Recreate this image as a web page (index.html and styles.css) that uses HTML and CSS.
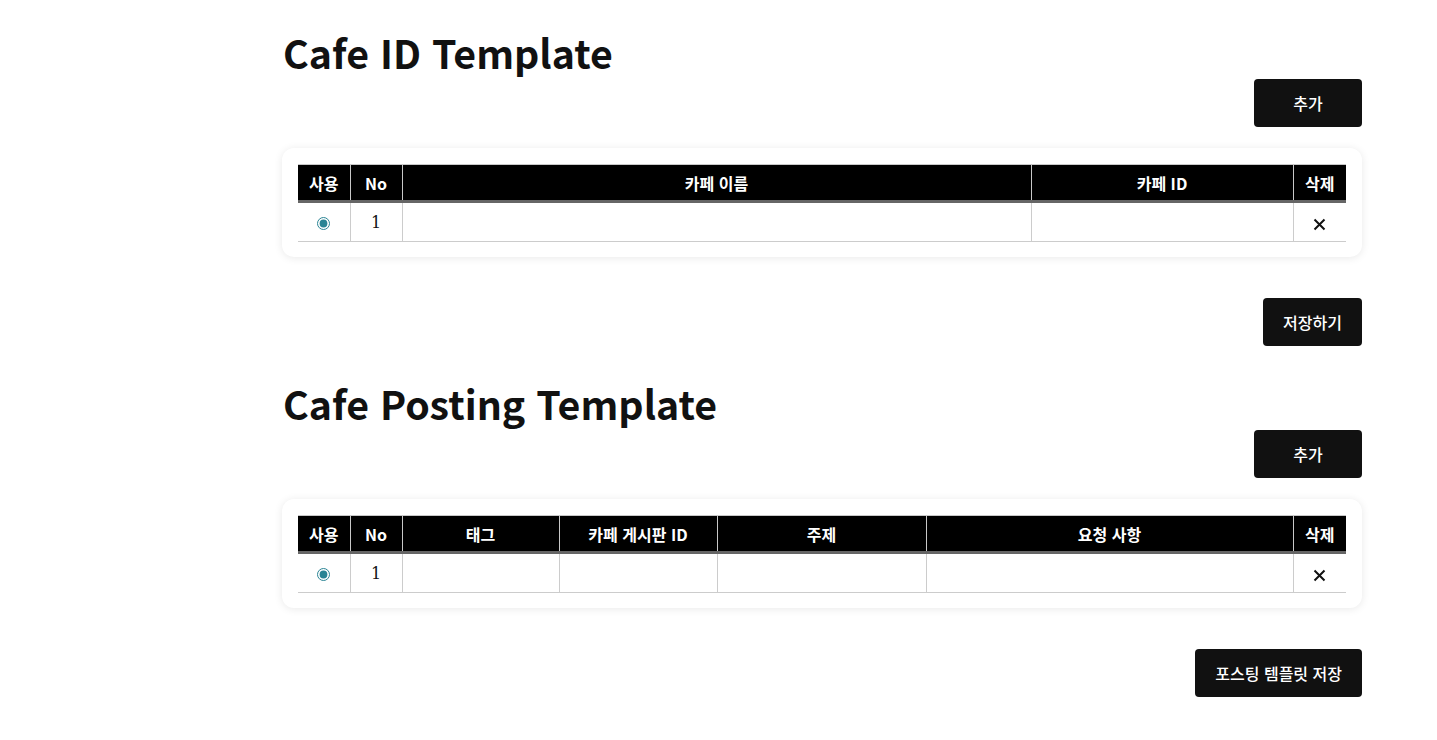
FILE: index.html
```html
<!DOCTYPE html>
<html lang="ko">
<head>
<meta charset="utf-8">
<title>Cafe Templates</title>
<link rel="stylesheet" href="styles.css">
</head>
<body>
<main class="page">
  <section class="section">
    <h1 class="title">Cafe ID Template</h1>
    <div class="actions actions-top"><button class="btn btn-add">추가</button></div>
    <div class="card">
      <table class="grid">
        <colgroup>
          <col class="c-use"><col class="c-no"><col class="c-name"><col class="c-id"><col class="c-del">
        </colgroup>
        <thead>
          <tr><th>사용</th><th>No</th><th>카페 이름</th><th>카페 ID</th><th>삭제</th></tr>
        </thead>
        <tbody>
          <tr>
            <td><input type="radio" name="cafe" checked></td>
            <td>1</td>
            <td></td>
            <td></td>
            <td><svg class="x" width="13" height="13" viewBox="0 0 13 13"><path d="M1.5 1.5L11.5 11.5M11.5 1.5L1.5 11.5"/></svg></td>
          </tr>
        </tbody>
      </table>
    </div>
    <div class="actions actions-save"><button class="btn">저장하기</button></div>
  </section>

  <section class="section">
    <h1 class="title">Cafe Posting Template</h1>
    <div class="actions actions-top"><button class="btn btn-add">추가</button></div>
    <div class="card">
      <table class="grid">
        <colgroup>
          <col class="c-use"><col class="c-no"><col class="c-tag"><col class="c-board"><col class="c-topic"><col class="c-req"><col class="c-del">
        </colgroup>
        <thead>
          <tr><th>사용</th><th>No</th><th>태그</th><th>카페 게시판 ID</th><th>주제</th><th>요청 사항</th><th>삭제</th></tr>
        </thead>
        <tbody>
          <tr>
            <td><input type="radio" name="post" checked></td>
            <td>1</td>
            <td></td>
            <td></td>
            <td></td>
            <td></td>
            <td><svg class="x" width="13" height="13" viewBox="0 0 13 13"><path d="M1.5 1.5L11.5 11.5M11.5 1.5L1.5 11.5"/></svg></td>
          </tr>
        </tbody>
      </table>
    </div>
    <div class="actions actions-save"><button class="btn">포스팅 템플릿 저장</button></div>
  </section>
</main>
</body>
</html>
```
FILE: styles.css
```css
html, body {
  margin: 0;
  padding: 0;
  background: #fff;
}
body {
  font-family: "Noto Sans CJK KR", "Noto Sans", sans-serif;
  color: #111;
}
.page {
  margin-left: 282px;
  width: 1080px;
}
.section {
  display: flex;
  flex-direction: column;
}
.title {
  margin: 28px 0 0 1px;
  font-size: 39.3px;
  line-height: 48px;
  font-weight: 700;
  color: #111;
}
.section + .section .title {
  margin-top: 33px;
}
.actions {
  display: flex;
  justify-content: flex-end;
}
.actions-top {
  margin-top: 3px;
}
.actions-save {
  margin-top: 41px;
}
.btn {
  height: 48px;
  padding: 0 20px;
  border: 0;
  border-radius: 4px;
  background: #111;
  color: #fff;
  font-family: "Noto Sans CJK KR", sans-serif;
  font-size: 16px;
  font-weight: 500;
  cursor: pointer;
}
.btn-add {
  min-width: 108px;
}
.card {
  margin-top: 21px;
  background: #fff;
  border-radius: 12px;
  box-shadow: 0 1px 8px rgba(0, 0, 0, 0.09);
  padding: 16px 16px 15px;
}
.grid {
  width: 100%;
  border-collapse: collapse;
  table-layout: fixed;
}
.c-use, .c-no { width: 52px; }
.c-del { width: 53px; }
.c-id { width: 262px; }
.c-tag { width: 157px; }
.c-board { width: 158px; }
.c-topic { width: 209px; }
.grid th {
  height: 37px;
  padding: 0;
  background: #000;
  color: #fff;
  font-size: 16px;
  font-weight: 700;
  text-align: center;
  border-top: 1px solid #c8c8c8;
  border-right: 1px solid #c8c8c8;
  border-bottom: 3px solid #666;
  box-sizing: border-box;
}
.grid td {
  height: 38px;
  padding: 0;
  text-align: center;
  font-family: "DejaVu Serif", serif;
  font-size: 16px;
  color: #111;
  border-right: 1px solid #ccc;
  border-bottom: 1px solid #ccc;
}
.grid th:last-child,
.grid td:last-child {
  border-right: 0;
}
.grid input[type="radio"] {
  margin: 0;
  width: 13px;
  height: 13px;
  accent-color: #2a8494;
  vertical-align: middle;
}
.x {
  display: inline-block;
  vertical-align: middle;
  margin-top: 3px;
}
.x path {
  stroke: #111;
  stroke-width: 2;
  fill: none;
}
```
